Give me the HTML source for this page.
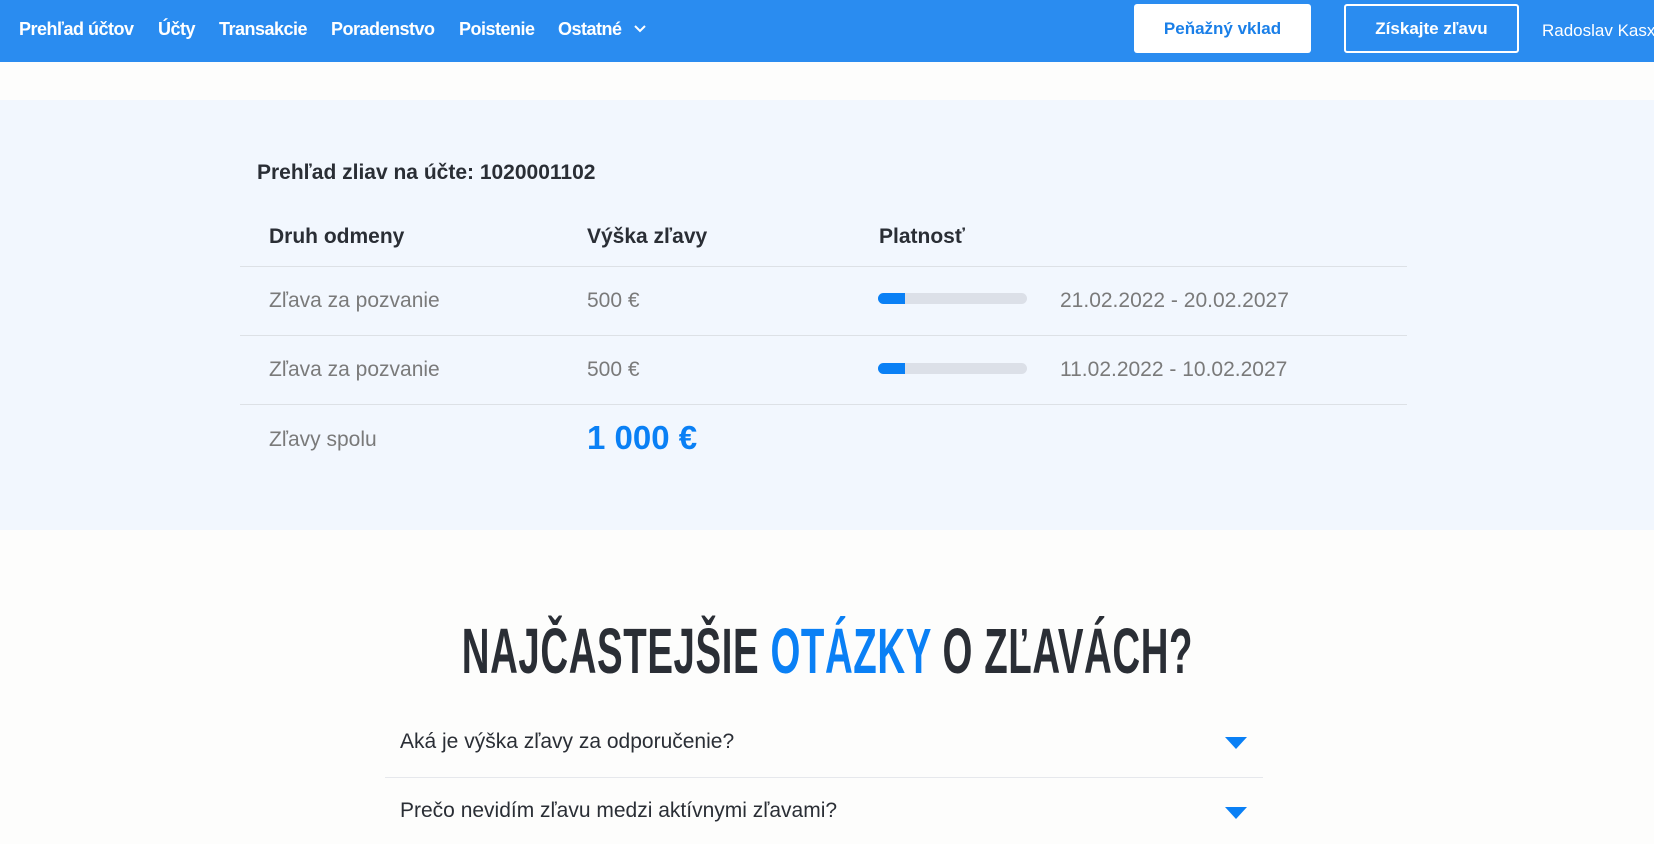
<!DOCTYPE html>
<html><head><meta charset="utf-8"><style>
*{margin:0;padding:0;box-sizing:border-box}
body{width:1654px;height:844px;overflow:hidden;background:#fdfdfc;font-family:"Liberation Sans",Arial,sans-serif;position:relative}
.hdr{position:absolute;left:0;top:0;width:1654px;height:62px;background:#2a8cf0}
.nav{position:absolute;top:19px;color:#fff;font-weight:bold;font-size:18px;letter-spacing:-0.5px}
.btn{position:absolute;top:4px;height:49px;border-radius:3px;font-weight:bold;font-size:17px;display:flex;align-items:center;justify-content:center}
.sec{position:absolute;left:0;top:100px;width:1654px;height:430px;background:#f2f7fe}
.t{position:absolute;font-size:21px;color:#7a7a7a}
.h{position:absolute;font-size:21px;font-weight:bold;color:#2a2e35}
.line{position:absolute;left:240px;width:1167px;height:1px;background:#dde1e6}
.bar{position:absolute;left:878px;width:149px;height:11px;border-radius:6px;background:#dce0e8;overflow:hidden}
.bar i{display:block;height:100%;width:27px;background:#0a80f5}
.faq{position:absolute;left:400px;font-size:21px;color:#2a2e35}
.tri{position:absolute;left:1225px;width:0;height:0;border-left:11px solid transparent;border-right:11px solid transparent;border-top:12px solid #0a80f5}
</style></head><body>
<div class="hdr"></div>
<div class="nav" style="left:19px">Prehľad účtov</div>
<div class="nav" style="left:158px">Účty</div>
<div class="nav" style="left:219px">Transakcie</div>
<div class="nav" style="left:331px">Poradenstvo</div>
<div class="nav" style="left:459px">Poistenie</div>
<div class="nav" style="left:558px">Ostatné</div>
<svg style="position:absolute;left:634px;top:24px" width="12" height="10" viewBox="0 0 12 10"><path d="M1 2l5 5 5-5" stroke="#fff" stroke-width="2" fill="none"/></svg>
<div class="btn" style="left:1134px;width:177px;background:#fff;color:#1a7fe8">Peňažný vklad</div>
<div class="btn" style="left:1344px;width:175px;border:2px solid #fff;color:#fff">Získajte zľavu</div>
<div style="position:absolute;left:1542px;top:21px;color:#fff;font-size:17px;white-space:nowrap">Radoslav Kasx</div>

<div class="sec"></div>
<div class="h" style="left:257px;top:161px">Prehľad zliav na účte: 1020001102</div>
<div class="h" style="left:269px;top:225px">Druh odmeny</div>
<div class="h" style="left:587px;top:225px">Výška zľavy</div>
<div class="h" style="left:879px;top:225px">Platnosť</div>
<div class="line" style="top:266px"></div>
<div class="t" style="left:269px;top:289px">Zľava za pozvanie</div>
<div class="t" style="left:587px;top:289px">500 €</div>
<div class="bar" style="top:293px"><i></i></div>
<div class="t" style="left:1060px;top:289px">21.02.2022 - 20.02.2027</div>
<div class="line" style="top:335px"></div>
<div class="t" style="left:269px;top:358px">Zľava za pozvanie</div>
<div class="t" style="left:587px;top:358px">500 €</div>
<div class="bar" style="top:363px"><i></i></div>
<div class="t" style="left:1060px;top:358px">11.02.2022 - 10.02.2027</div>
<div class="line" style="top:404px"></div>
<div class="t" style="left:269px;top:428px">Zľavy spolu</div>
<div style="position:absolute;left:587px;top:419px;font-size:33px;font-weight:bold;color:#0a80f5">1 000 €</div>

<div style="position:absolute;left:0;width:1654px;top:614px;text-align:center">
<span style="display:inline-block;font-size:64px;font-weight:bold;color:#2a2e35;transform:scaleX(0.6);white-space:nowrap;letter-spacing:1px">NAJČASTEJŠIE <span style="color:#0a80f5">OTÁZKY</span> O ZĽAVÁCH?</span></div>

<div class="faq" style="top:730px">Aká je výška zľavy za odporučenie?</div>
<div class="tri" style="top:737px"></div>
<div style="position:absolute;left:385px;top:777px;width:878px;height:1px;background:#e6e8ec"></div>
<div class="faq" style="top:799px">Prečo nevidím zľavu medzi aktívnymi zľavami?</div>
<div class="tri" style="top:807px"></div>
</body></html>
